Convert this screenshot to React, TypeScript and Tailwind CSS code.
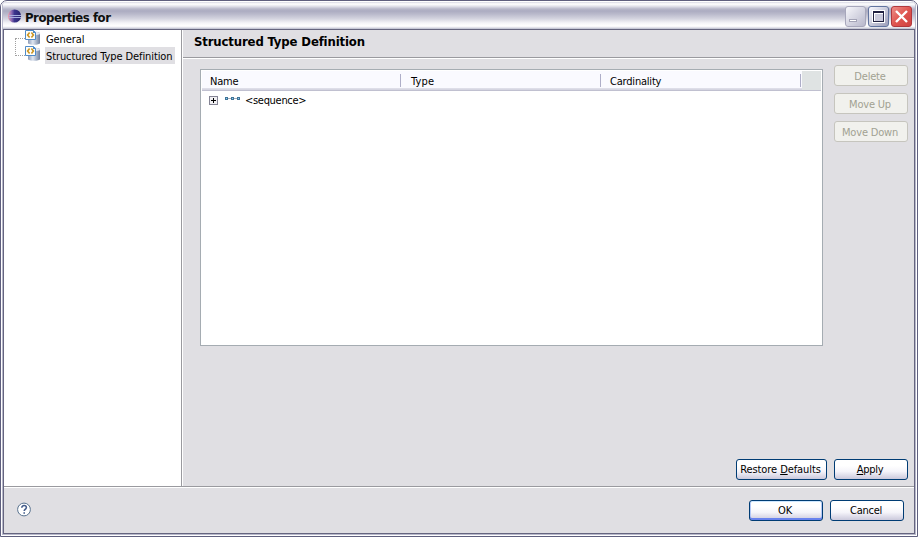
import type { ReactNode } from 'react';

function EclipseIcon() {
  return (
    <svg width="16" height="16" viewBox="0 0 16 16" className="shrink-0">
      <defs>
        <linearGradient id="orb" x1="0" x2="1">
          <stop offset="0" stopColor="#f0a4ae" />
          <stop offset=".28" stopColor="#8b6cb4" />
          <stop offset=".5" stopColor="#3b348c" />
          <stop offset="1" stopColor="#28246e" />
        </linearGradient>
      </defs>
      <circle cx="7.5" cy="8" r="6.6" fill="url(#orb)" />
      <path d="M2 7.5h12M2 9.5h12" stroke="#a9b0e0" strokeWidth="1" />
    </svg>
  );
}

function TypeIcon() {
  return (
    <svg width="16" height="16" viewBox="0 0 16 16" className="shrink-0">
      <defs>
        <linearGradient id="drum" x1="0" x2="1">
          <stop offset="0" stopColor="#8c9bb8" />
          <stop offset=".4" stopColor="#dfe6f1" />
          <stop offset="1" stopColor="#71829f" />
        </linearGradient>
      </defs>
      <path d="M3 3.5C3 1 15 1 15 3.5V13c0 2.4-12 2.4-12 0z" fill="url(#drum)" />
      <path d="M10 2c3 0 5 .6 5 1.6S13 5 11 5z" fill="#e6ebf4" />
      <path d="M.5 .5h8l2 2v7h-10z" fill="#fffef8" stroke="#4f8bc9" />
      <path d="M8 0v3h3z" fill="#4f8bc9" />
      <path d="M4.6 2.6 2.6 5l2 2.4M6.4 2.6l2 2.4-2 2.4" fill="none" stroke="#cb9522" strokeWidth="1.6" />
    </svg>
  );
}

function SequenceIcon() {
  return (
    <svg width="16" height="5" viewBox="0 0 16 5" shapeRendering="crispEdges" className="shrink-0">
      <path d="M0 2.5h15" stroke="#a0a8b6" />
      <path d="M0 1h3v3H0zM6 1h3v3H6zM12 1h3v3h-3z" fill="#3f7398" />
      <path d="M1 2h1v1H1zM7 2h1v1H7zM13 2h1v1h-1z" fill="#8ed0ee" />
    </svg>
  );
}

function PushButton({ children, wide, primary }: { children: ReactNode; wide?: boolean; primary?: boolean }) {
  return (
    <button
      className={`flex h-[21px] items-center justify-center whitespace-nowrap rounded-[3px] border border-[#003c74] bg-linear-to-b from-white from-30% via-[#f5f4fa] via-60% to-[#cbc9dc] pr-[2px] ${wide ? 'w-[91px] tracking-[-0.08px]' : 'w-[74px]'} ${primary ? 'shadow-[inset_0_1px_0_#cee7ff,inset_0_-2px_0_#6982ee,inset_1px_0_0_#b4c8f6,inset_-1px_0_0_#b4c8f6]' : ''}`}
    >
      <span className="pt-px">{children}</span>
    </button>
  );
}

function DisabledButton({ children }: { children: ReactNode }) {
  return (
    <button disabled className="flex h-[21px] w-[74px] items-center justify-center whitespace-nowrap rounded-[3px] border border-[#c6c5be] bg-[#f1f1ed] pr-[2px] pt-[2px] tracking-[-0.2px] text-[#a1a192]">
      {children}
    </button>
  );
}

function TitleBar() {
  return (
    <header className="flex h-[27px] shrink-0 justify-between bg-[linear-gradient(#d6d6e2_0px,#fff_2px,#e6e6ee_4px,#b6b6c9_7px,#acacc1_9px,#b9b9cb_12px,#d6d6e1_17px,#f4f4f8_21px,#ffffff_24px,#f0f0f5_25px,#b8bacb_27px)] pl-[5px] pr-[4px]">
      <div className="flex h-[28px] items-center gap-[2px]">
        <EclipseIcon />
        <span className="whitespace-nowrap pt-[3px] text-[13px] font-bold leading-4 tracking-[-0.46px] text-[#0e1010]">Properties for</span>
      </div>
      <div className="flex gap-[2px] pt-[4px]">
        <button aria-label="Minimize" className="size-[21px] rounded-[3px] border border-[#a7a7bb] bg-linear-to-br from-[#f7f7fb] to-[#b7b7cb]">
          <svg width="19" height="19" shapeRendering="crispEdges"><path d="M3 12h8v3H3z" fill="#a3a3b6" /><path d="M4 13h6v1H4z" fill="#fff" /></svg>
        </button>
        <button aria-label="Maximize" className="size-[21px] rounded-[3px] border border-[#62749f] bg-linear-to-br from-[#fafaff] to-[#9c9eb9]">
          <svg width="19" height="19" shapeRendering="crispEdges"><path d="M3 3h13v13H3z" fill="#fff" /><path d="M4 4h11v11H4z" fill="#202040" /><path d="M5 6h9v8H5z" fill="#fff" /><path d="M6 7h8v7H6z" fill="#c9c9da" /></svg>
        </button>
        <button aria-label="Close" className="size-[21px] rounded-[3px] border border-[#b1383d] bg-linear-to-br from-[#ec8d88] via-[#df5550] to-[#cf4242]">
          <svg width="19" height="19"><path d="m4 4 11 11m0-11-11 11" stroke="#fff" strokeWidth="2.4" /></svg>
        </button>
      </div>
    </header>
  );
}

function Tree() {
  return (
    <nav className="flex w-[178px] shrink-0 border-r border-[#9a9a9f] bg-white">
      <div className="ml-[11px] mt-[8px] h-[18px] w-[10px] shrink-0 border-y border-l border-dotted border-[#a0a0a0]" />
      <div className="flex flex-col">
        <TypeIcon />
        <TypeIcon />
      </div>
      <div className="ml-[4px] flex flex-col tracking-[-0.1px]">
        <span className="h-[17px] whitespace-nowrap px-px leading-[20px]">General</span>
        <span className="h-[17px] w-[130px] whitespace-nowrap bg-[#e0dfe3] pl-px leading-[19px]">Structured Type Definition</span>
      </div>
    </nav>
  );
}

function TypeTable() {
  return (
    <section className="h-[277px] w-[623px] shrink-0 border border-[#a5acb2] bg-white p-px">
      <div className="flex h-[20px] border-b border-[#c0c0d0] bg-[linear-gradient(#fafaff_0px,#fafaff_17px,#e2e2ec_17px,#d2d2df_19px)]">
        <div className="flex h-[17px] w-[199px] shrink-0 items-center justify-between pl-[8px]">
          <span className="pt-[5px] tracking-[-0.2px]">Name</span>
          <i className="mt-[2px] h-[13px] w-px bg-[#aeaec8]" />
        </div>
        <div className="flex h-[17px] w-[200px] shrink-0 items-center justify-between pl-[10px]">
          <span className="pt-[5px] tracking-[0.15px]">Type</span>
          <i className="mt-[2px] h-[13px] w-px bg-[#aeaec8]" />
        </div>
        <div className="flex h-[17px] w-[200px] shrink-0 items-center justify-between pl-[9px]">
          <span className="pt-[5px] tracking-[-0.2px]">Cardinality</span>
          <i className="mt-[2px] h-[13px] w-px bg-[#aeaec8]" />
        </div>
        <div className="ml-px h-[19px] flex-1 bg-[#dfe3e3]" />
      </div>
      <div className="flex h-[18px] items-center pl-[7px]">
        <svg width="9" height="9" shapeRendering="crispEdges" className="shrink-0"><rect x=".5" y=".5" width="8" height="8" rx="1" fill="#f1f0f3" stroke="#848494" /><path d="M2 4.5h5M4.5 2v5" stroke="#000" /></svg>
        <span className="ml-[7px] flex pb-[3px]"><SequenceIcon /></span>
        <span className="ml-[4px] pt-px tracking-[-0.3px]">&lt;sequence&gt;</span>
      </div>
    </section>
  );
}

export default function App() {
  return (
    <div className="h-[537px] w-[918px] overflow-hidden bg-white font-['DejaVu_Sans_Condensed','DejaVu_Sans',sans-serif] text-[11px] leading-[14px] tracking-[-0.25px] text-black [font-stretch:condensed]">
      <div className="flex h-full flex-col rounded-t-[7px] border border-[#5f5f7e] bg-white">
        <div className="flex h-full flex-col rounded-t-[6px] border border-t-0 border-white">
          <div className="flex min-h-0 flex-1 flex-col overflow-hidden rounded-t-[5px] border border-t-0 border-[#b8b8cb]">
            <div className="-mx-px pt-px">
              <TitleBar />
            </div>
            <main className="flex min-h-0 flex-1 flex-col border border-[#65657f] bg-[#e0dfe3]">
              <div className="flex h-[456px] shrink-0">
                <Tree />
                <section className="flex min-w-0 flex-1 flex-col border-l border-white">
                  <h1 className="h-[28px] shrink-0 border-b border-[#9a9a9f] pl-[11px] pt-[3px] text-[13px] font-bold leading-[17px] tracking-[-0.14px]">Structured Type Definition</h1>
                  <div className="flex min-h-0 flex-1 justify-between border-t border-white pb-[6px] pl-[17px] pr-[6px] pt-[6px]">
                    <div className="pt-[4px]"><TypeTable /></div>
                    <aside className="flex flex-col gap-[7px]">
                      <DisabledButton>Delete</DisabledButton>
                      <DisabledButton>Move Up</DisabledButton>
                      <DisabledButton>Move Down</DisabledButton>
                    </aside>
                  </div>
                  <div className="flex h-[27px] shrink-0 justify-end gap-[7px] pr-[6px]">
                    <PushButton wide>Restore&nbsp;<u>D</u>efaults</PushButton>
                    <PushButton><u>A</u>pply</PushButton>
                  </div>
                </section>
              </div>
              <footer className="flex min-h-0 flex-1 justify-between border-t border-[#9a9a9f]">
                <div className="flex w-full justify-between border-t border-white pl-[13px] pr-[10px] pt-[12px]">
                  <svg width="15" height="15" className="mt-[2px]"><circle cx="7" cy="7.5" r="6.4" fill="#fff" stroke="#58728f" /><path d="M4.8 5.7c0-3 4.6-2.7 4.6-.1 0 1.6-2.2 1.5-2.2 3.5M7.2 10.3v1.4" fill="none" stroke="#455d8c" strokeWidth="1.6" /></svg>
                  <div className="flex gap-[7px]">
                    <PushButton primary>OK</PushButton>
                    <PushButton>Cancel</PushButton>
                  </div>
                </div>
              </footer>
            </main>
          </div>
        </div>
      </div>
    </div>
  );
}
